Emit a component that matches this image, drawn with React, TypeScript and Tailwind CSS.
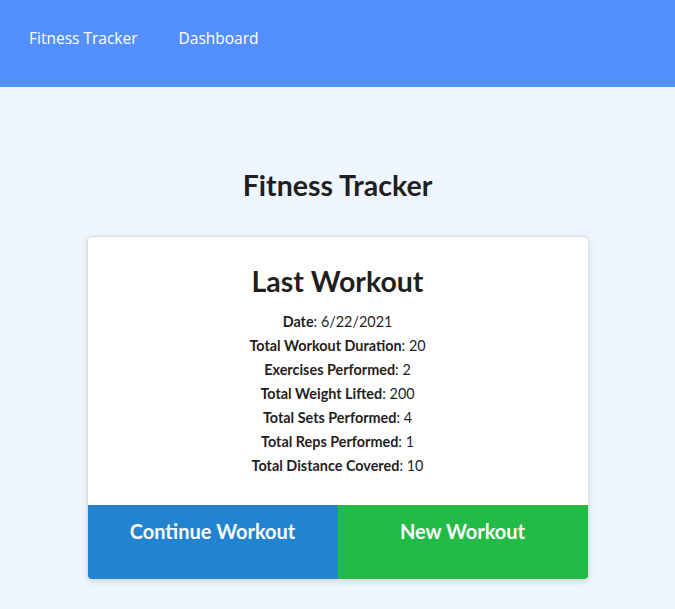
const stats: [string, string][] = [
  ["Date", "6/22/2021"],
  ["Total Workout Duration", "20"],
  ["Exercises Performed", "2"],
  ["Total Weight Lifted", "200"],
  ["Total Sets Performed", "4"],
  ["Total Reps Performed", "1"],
  ["Total Distance Covered", "10"],
];

export default function App() {
  return (
    <div className="min-h-[609px] bg-[#eff6ff] font-['Lato',sans-serif] text-[#1f1f1f]">
      <nav className="h-[87px] bg-[#5490fd] flex items-center gap-[41px] px-[29px] pb-[9px] font-['Open_Sans',sans-serif] text-[15.5px] text-white">
        <a href="#">Fitness Tracker</a>
        <a href="#">Dashboard</a>
      </nav>
      <main className="flex flex-col items-center pt-[81px]">
        <h1 className="text-[28.5px] font-bold leading-[34px]">Fitness Tracker</h1>
        <div className="mt-[34px] w-[502px] bg-white rounded-[5px] border border-[#dcdcdc] shadow-[0_2px_6px_rgba(0,0,0,0.12)] overflow-hidden">
          <div className="flex flex-col items-center pt-[26px] pb-[27px]">
            <h2 className="text-[28.5px] font-bold leading-[36px]">Last Workout</h2>
            <div className="mt-[11px] flex flex-col items-center text-[14.4px] leading-[24px]">
              {stats.map(([label, value]) => (
                <p key={label}>
                  <span className="font-bold">{label}</span>: {value}
                </p>
              ))}
            </div>
          </div>
          <div className="grid grid-cols-2 h-[74px] text-white text-[20px] font-bold">
            <button className="bg-[#2284d0] pt-[11px] flex justify-center items-start">Continue Workout</button>
            <button className="bg-[#22bb45] pt-[11px] flex justify-center items-start">New Workout</button>
          </div>
        </div>
      </main>
    </div>
  );
}
